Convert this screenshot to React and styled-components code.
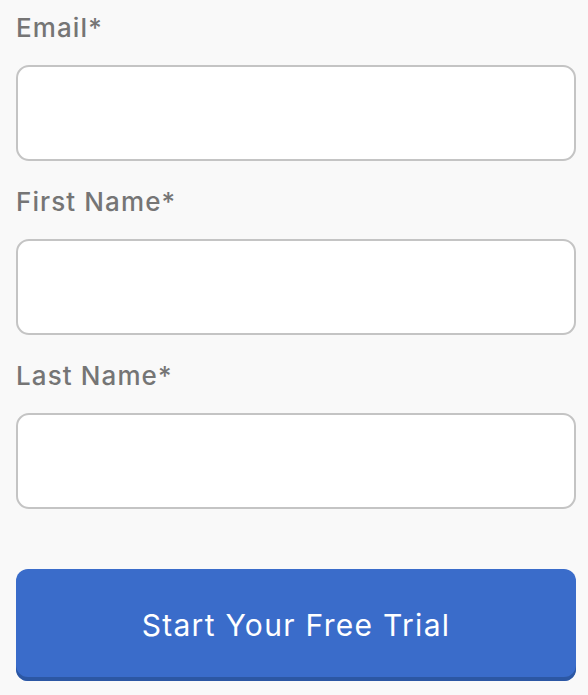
import React from "react"
import styled, { createGlobalStyle } from "styled-components"

const Global = createGlobalStyle`
    html, body {
        margin: 0;
        padding: 0;
        background: #f9f9f9;
    }
    * { box-sizing: border-box; }
`

const Form = styled.form`
    display: flex;
    flex-direction: column;
    padding: 0 12px 0 16px;
    font-family: Inter, "Open Sans", sans-serif;
`

const Field = styled.div`
    display: flex;
    flex-direction: column;
    margin-bottom: 13px;
`

const Label = styled.label`
    font-size: 26px;
    font-weight: 500;
    color: #757575;
    line-height: 54px;
    margin-top: 1px;
    margin-bottom: 10px;
    letter-spacing: 1.1px;
`

const Input = styled.input`
    height: 96px;
    width: 100%;
    border: 2px solid #c4c4c4;
    border-radius: 13px;
    background: #fff;
    outline: none;
    font-size: 22px;
    padding: 0 18px;
`

const Button = styled.button`
    margin-top: 47px;
    height: 112px;
    width: 100%;
    border: none;
    border-radius: 12px;
    background: #3a6cca;
    box-shadow: inset 0 -4px 0 #2c57a3;
    color: #fff;
    font-family: Inter, "Open Sans", sans-serif;
    font-size: 30px;
    font-weight: 400;
    letter-spacing: 1.3px;
    padding: 0;
    cursor: pointer;
`

const fields = ["Email*", "First Name*", "Last Name*"]

export default function App () {
    return (
        <>
            <Global />
            <Form onSubmit = { e => e.preventDefault() }>
                { fields.map(f => (
                    <Field key = { f }>
                        <Label>{ f }</Label>
                        <Input type = "text" />
                    </Field>
                )) }
                <Button type = "submit">Start Your Free Trial</Button>
            </Form>
        </>
    )
}
